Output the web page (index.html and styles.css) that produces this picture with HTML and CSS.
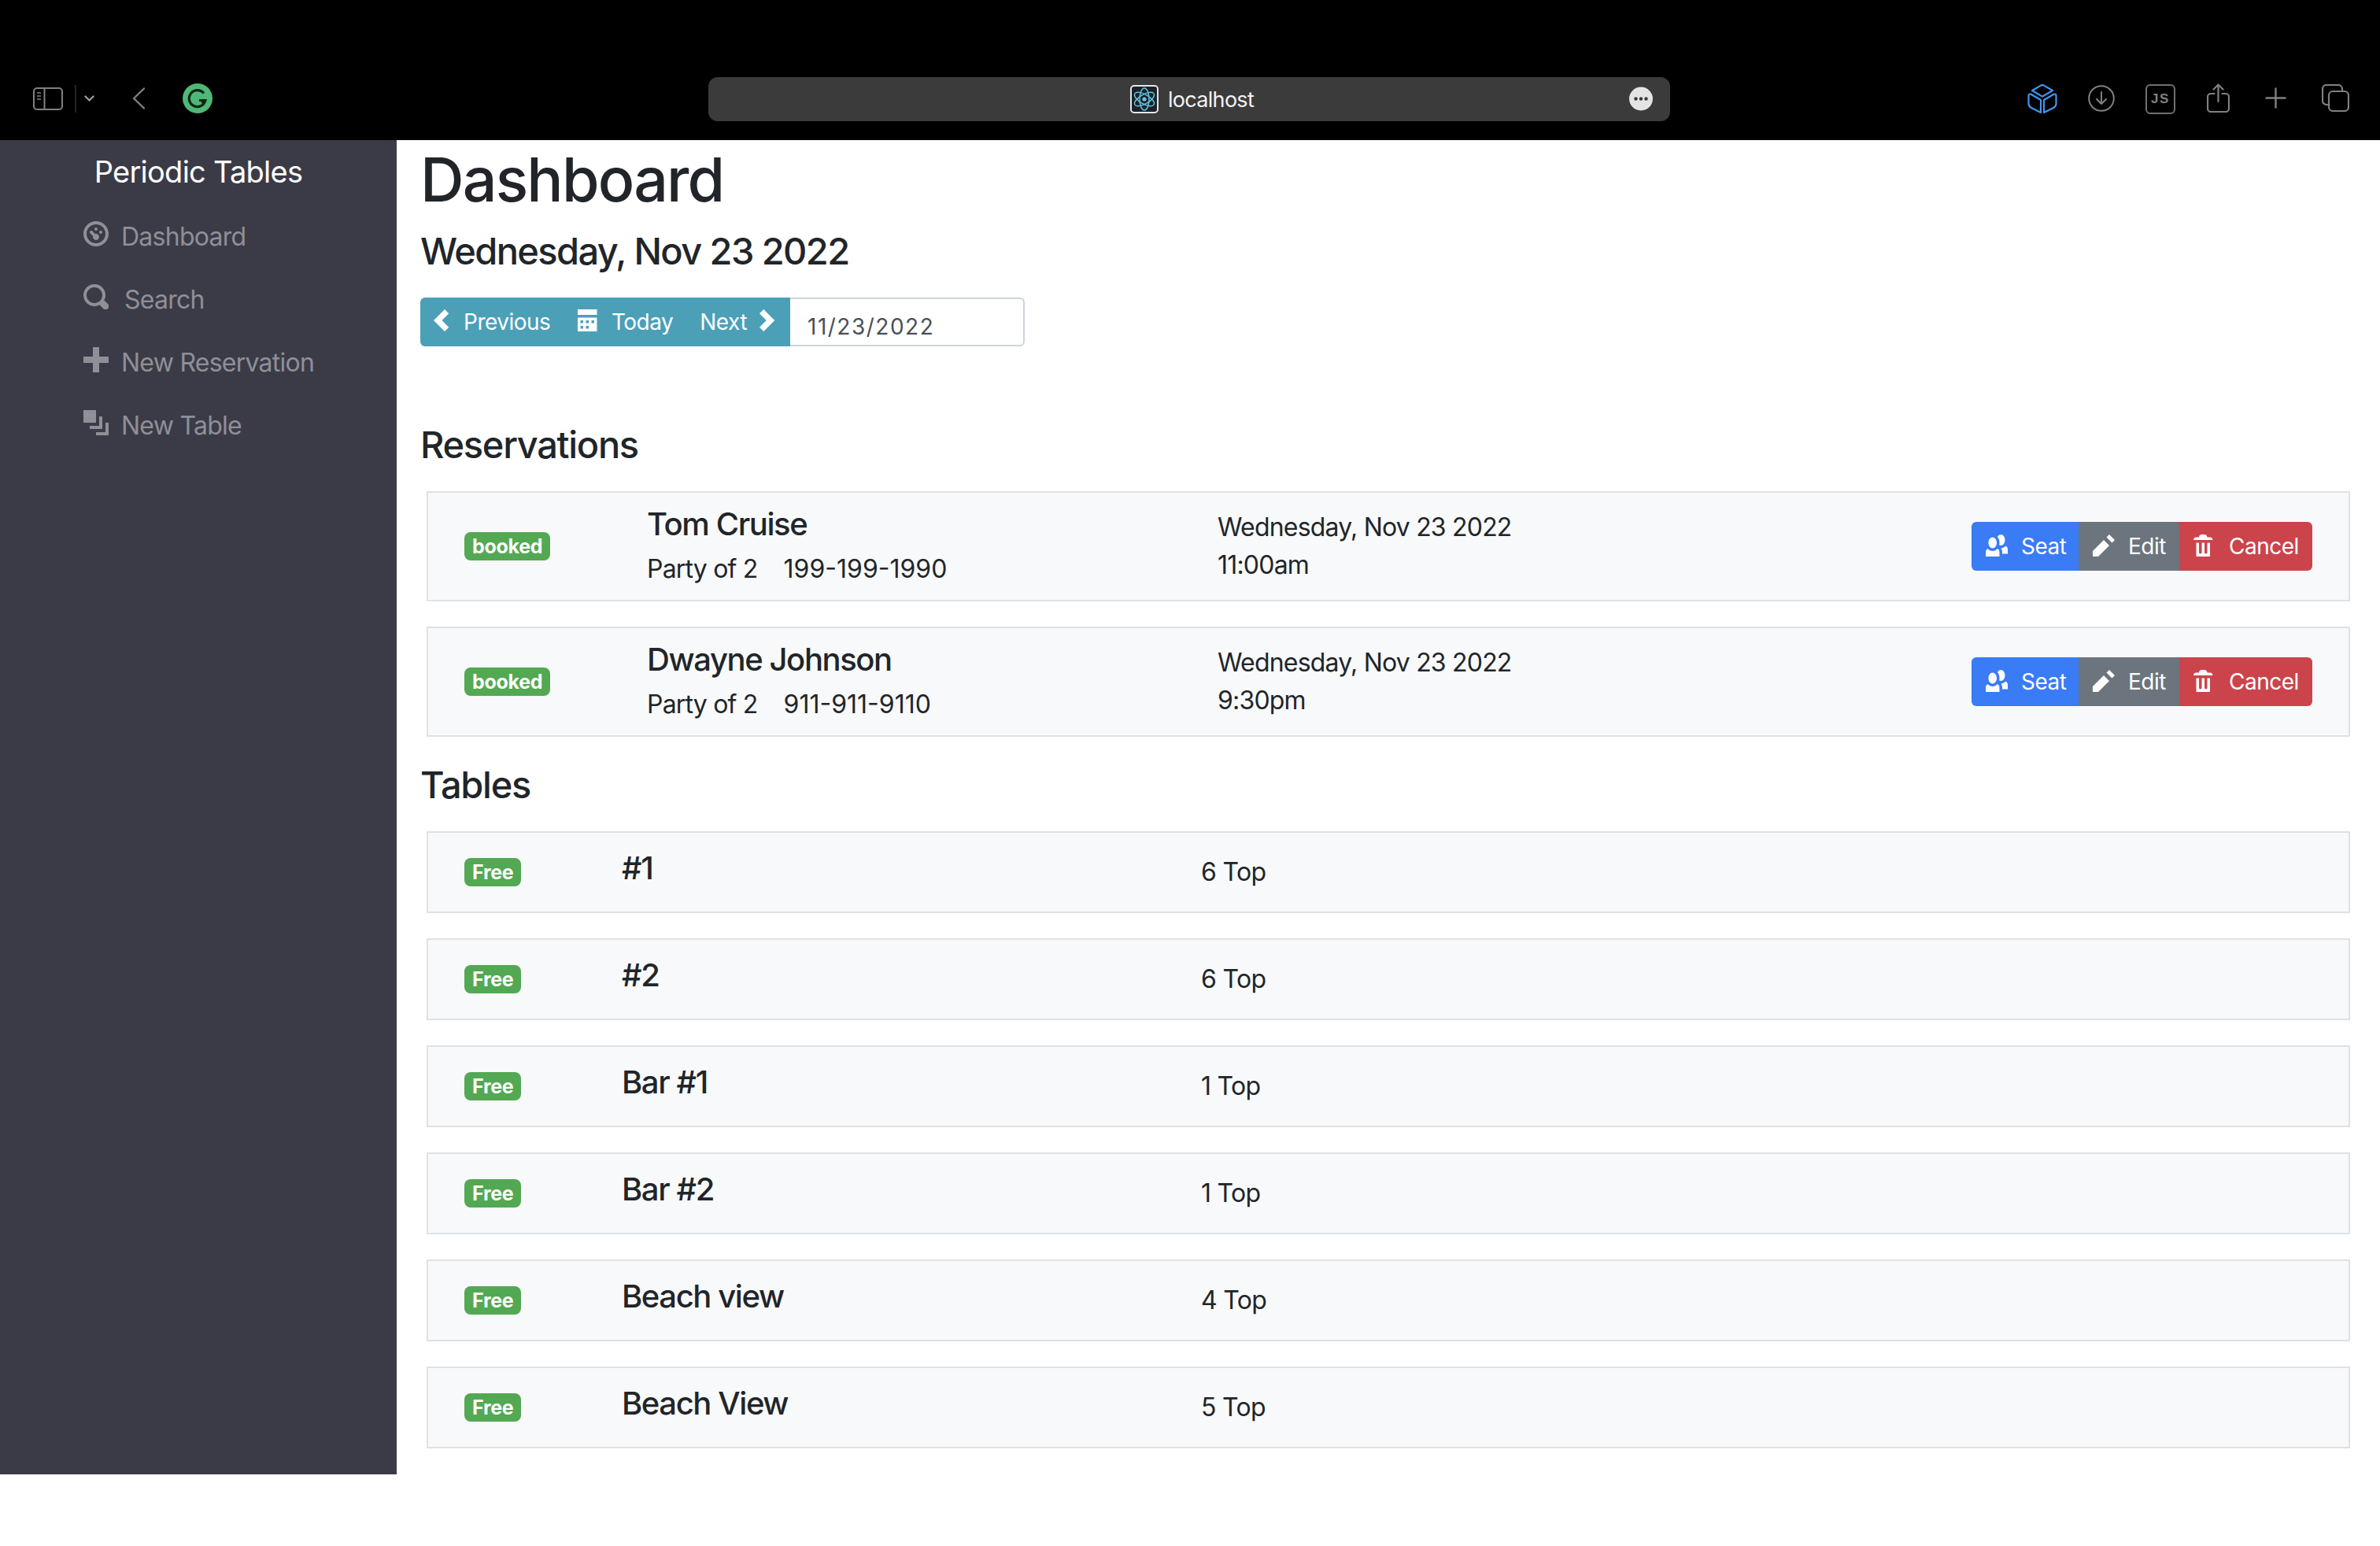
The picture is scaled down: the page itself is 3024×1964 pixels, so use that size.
FILE: index.html
```html
<!DOCTYPE html>
<html lang="en">
<head>
<meta charset="utf-8">
<title>Periodic Tables</title>
<link rel="stylesheet" href="styles.css">
</head>
<body>
<header class="toolbar">
  <div class="tb-left">
    <svg class="tb-sidebar" viewBox="0 0 38 29" fill="none" stroke="#808080" stroke-width="2"><rect x="1" y="1" width="36" height="27" rx="4"/><path d="M14.500 1v27"/><path d="M5 7h5M5 11h5M5 15h5" stroke-width="1.500"/></svg>
    <span class="tb-divider"></span>
    <svg class="tb-chevron" viewBox="0 0 13 8" fill="none" stroke="#9a9a9a" stroke-width="2.400" stroke-linecap="round" stroke-linejoin="round"><path d="M1.500 1.500 6.500 6.500 11.500 1.500"/></svg>
    <svg class="tb-back" viewBox="0 0 16 28" fill="none" stroke="#808080" stroke-width="2.400" stroke-linecap="round" stroke-linejoin="round"><path d="M15 1.500 2 14 15 26.500"/></svg>
    <svg class="tb-grammarly" viewBox="0 0 38 38"><circle cx="19" cy="19" r="19" fill="#4fb877"/><path d="M27 12.500A10.500 10.500 0 1 0 29 21.500H21" fill="none" stroke="#10261a" stroke-width="3.200"/><path d="M29 21.500l-1 6-5-3.500z" fill="#10261a"/></svg>
  </div>
  <div class="address">
    <svg class="favicon" viewBox="0 0 36 36" fill="none"><rect x="1" y="1" width="34" height="34" rx="4" fill="#1b2227" stroke="#e6e6e6" stroke-width="2"/><g stroke="#61c8ea" stroke-width="1.400"><ellipse cx="18" cy="18" rx="6" ry="14"/><ellipse cx="18" cy="18" rx="6" ry="14" transform="rotate(60 18 18)"/><ellipse cx="18" cy="18" rx="6" ry="14" transform="rotate(-60 18 18)"/></g><circle cx="18" cy="18" r="2.600" fill="#61c8ea"/></svg>
    <span class="address-text">localhost</span>
    <svg class="address-more" viewBox="0 0 30 31"><circle cx="15" cy="15.500" r="15" fill="#e4e4e4"/><circle cx="8.500" cy="15.500" r="2.200" fill="#3a3a3a"/><circle cx="15" cy="15.500" r="2.200" fill="#3a3a3a"/><circle cx="21.500" cy="15.500" r="2.200" fill="#3a3a3a"/></svg>
  </div>
  <div class="tb-right">
    <svg class="tb-cube" viewBox="0 0 38 38" fill="none" stroke="#3f96f0" stroke-width="2.200" stroke-linejoin="round"><path d="M17 1.600a4 4 0 0 1 4 0l11 6.400-13 7.600L6 8z"/><path d="M1.500 14.500a2 2 0 0 1 3-1.700L17 20v16L5 30a6 6 0 0 1-3.500-5z"/><path d="M36.500 14.500a2 2 0 0 0-3-1.700L21 20v16l12-6a6 6 0 0 0 3.500-5z"/></svg>
    <svg class="tb-download" viewBox="0 0 34 34" fill="none" stroke="#808080" stroke-width="2" stroke-linecap="round" stroke-linejoin="round"><circle cx="17" cy="17" r="15.800"/><path d="M17 9v15M11 18l6 6 6-6"/></svg>
    <div class="tb-js">JS</div>
    <svg class="tb-share" viewBox="0 0 29 37" fill="none" stroke="#808080" stroke-width="2.200" stroke-linecap="round" stroke-linejoin="round"><path d="M14.500 23V2M8.500 7.500l6-6 6 6"/><path d="M9.500 13H5a4 4 0 0 0-4 4v15a4 4 0 0 0 4 4h19a4 4 0 0 0 4-4V17a4 4 0 0 0-4-4h-4.500"/></svg>
    <svg class="tb-plus" viewBox="0 0 27 27" fill="none" stroke="#808080" stroke-width="2.400" stroke-linecap="round"><path d="M13.500 1.500v24M1.500 13.500h24"/></svg>
    <svg class="tb-copy" viewBox="0 0 35 35" fill="none" stroke="#808080" stroke-width="2.200"><path d="M8 26H6a5 5 0 0 1-5-5V6a5 5 0 0 1 5-5h15a5 5 0 0 1 5 5v2"/><rect x="9" y="9" width="25" height="25" rx="5"/></svg>
  </div>
</header>

<div class="layout">
  <aside class="sidebar">
    <div class="brand">Periodic Tables</div>
    <nav class="nav">
      <a class="nav-item"><svg class="nav-icon" viewBox="0 0 8 8"><path d="M4 0c-2.200 0-4 1.800-4 4s1.800 4 4 4 4-1.800 4-4-1.800-4-4-4zm0 1c1.660 0 3 1.340 3 3s-1.340 3-3 3-3-1.340-3-3 1.340-3 3-3zm0 1c-.28 0-.5.22-.5.5s.22.5.5.5.5-.22.5-.5-.22-.5-.5-.5zm-1.660 1a.5.5 0 0 0-.19.84l.91.91c-.02.08-.06.16-.06.25 0 .55.45 1 1 1s1-.45 1-1-.45-1-1-1c-.09 0-.17.04-.25.06l-.91-.91a.5.5 0 0 0-.44-.16.5.5 0 0 0-.06 0zm3.160 0c-.28 0-.5.22-.5.5s.22.5.5.5.5-.22.5-.5-.22-.5-.5-.5z"/></svg><span>Dashboard</span></a>
      <a class="nav-item nav-item-wide"><svg class="nav-icon" viewBox="0 0 8 8"><path d="M3.500 0c-1.930 0-3.500 1.570-3.500 3.500s1.570 3.500 3.500 3.500c.59 0 1.170-.14 1.660-.41a1 1 0 0 0 .13.13l1 1a1.020 1.020 0 1 0 1.440-1.440l-1-1a1 1 0 0 0-.16-.13c.27-.49.44-1.060.44-1.660 0-1.930-1.570-3.500-3.500-3.500zm0 1c1.390 0 2.500 1.110 2.500 2.500 0 .66-.24 1.270-.66 1.720-.01.01-.02.02-.03.03a1 1 0 0 0-.13.13c-.44.4-1.040.63-1.690.63-1.390 0-2.500-1.110-2.500-2.500s1.110-2.500 2.500-2.500z"/></svg><span>Search</span></a>
      <a class="nav-item"><svg class="nav-icon" viewBox="0 0 8 8"><path d="M3 0v3h-3v2h3v3h2v-3h3v-2h-3v-3h-2z"/></svg><span>New Reservation</span></a>
      <a class="nav-item"><svg class="nav-icon" viewBox="0 0 8 8"><path d="M0 0v4h4v-4h-4zm5 2v3h-3v1h4v-4h-1zm2 2v3h-3v1h4v-4h-1z"/></svg><span>New Table</span></a>
    </nav>
  </aside>

  <main class="main">
    <h1 class="title">Dashboard</h1>
    <h2 class="date">Wednesday, Nov 23 2022</h2>
    <div class="date-bar">
      <div class="date-buttons">
        <a class="date-btn date-prev"><svg class="date-icon" viewBox="0 0 6 8"><path d="M4 0l-4 4 4 4 1.500-1.500-2.500-2.500 2.500-2.500-1.500-1.500z"/></svg><span>Previous</span></a>
        <a class="date-btn date-today"><svg class="date-icon" viewBox="0 0 7 8"><path d="M0 0v2h7v-2h-7zm0 3v4.910c0 .05.04.09.09.09h6.810c.05 0 .09-.04.09-.09v-4.910h-7zm1 1h1v1h-1v-1zm2 0h1v1h-1v-1zm2 0h1v1h-1v-1zm-4 2h1v1h-1v-1zm2 0h1v1h-1v-1z"/></svg><span>Today</span></a>
        <a class="date-btn date-next"><span>Next</span><svg class="date-icon" viewBox="0 0 6 8"><path d="M1.500 0l-1.500 1.500 2.500 2.500-2.500 2.500 1.500 1.500 4-4-4-4z"/></svg></a>
      </div>
      <div class="date-input">11/23/2022</div>
    </div>

    <h3 class="section section-res">Reservations</h3>

    <article class="card card-res">
      <div class="col-status-res"><span class="badge">booked</span></div>
      <div class="col-name-res">
        <div class="res-name">Tom Cruise</div>
        <div class="res-meta"><span class="res-party">Party of 2</span><span class="res-phone">199-199-1990</span></div>
      </div>
      <div class="col-time"><div>Wednesday, Nov 23 2022</div><div>11:00am</div></div>
      <div class="actions">
        <a class="act act-seat"><svg class="act-icon" viewBox="0 0 8 8"><path d="M5.500 0c-.51 0-.95.35-1.220.88.45.54.72 1.280.72 2.130 0 .29-.03.55-.09.81.19.11.38.19.59.19.83 0 1.500-.9 1.500-2s-.67-2-1.500-2zm-3 1c-.83 0-1.500.9-1.500 2s.67 2 1.500 2 1.500-.9 1.500-2-.67-2-1.500-2zm4.750 3.160c-.43.51-1.020.82-1.690.84.27.38.44.84.44 1.340v.66h2v-1.660c0-.52-.31-.97-.75-1.190zm-6.500 1c-.44.22-.75.67-.75 1.190v1.660h5v-1.660c0-.52-.31-.97-.75-1.190-.45.53-1.060.84-1.750.84s-1.300-.32-1.750-.84z"/></svg><span>Seat</span></a>
        <a class="act act-edit"><svg class="act-icon" viewBox="0 0 8 8"><path d="M6 0l-1 1 2 2 1-1-2-2zm-2 2l-4 4v2h2l4-4-2-2z"/></svg><span>Edit</span></a>
        <a class="act act-cancel"><svg class="act-icon" viewBox="0 0 8 8"><path d="M3 0c-.55 0-1 .45-1 1h-1c-.55 0-1 .45-1 1h7c0-.55-.45-1-1-1h-1c0-.55-.45-1-1-1h-1zm-2 3v4.810c0 .11.08.19.19.19h4.630c.11 0 .19-.08.19-.19v-4.810h-1v3.500c0 .28-.22.5-.5.5s-.5-.22-.5-.5v-3.500h-1v3.500c0 .28-.22.5-.5.5s-.5-.22-.5-.5v-3.500h-1z"/></svg><span>Cancel</span></a>
      </div>
    </article>

    <article class="card card-res">
      <div class="col-status-res"><span class="badge">booked</span></div>
      <div class="col-name-res">
        <div class="res-name">Dwayne Johnson</div>
        <div class="res-meta"><span class="res-party">Party of 2</span><span class="res-phone">911-911-9110</span></div>
      </div>
      <div class="col-time"><div>Wednesday, Nov 23 2022</div><div>9:30pm</div></div>
      <div class="actions">
        <a class="act act-seat"><svg class="act-icon" viewBox="0 0 8 8"><path d="M5.500 0c-.51 0-.95.35-1.220.88.45.54.72 1.280.72 2.130 0 .29-.03.55-.09.81.19.11.38.19.59.19.83 0 1.500-.9 1.500-2s-.67-2-1.500-2zm-3 1c-.83 0-1.500.9-1.500 2s.67 2 1.500 2 1.500-.9 1.500-2-.67-2-1.500-2zm4.750 3.160c-.43.51-1.020.82-1.690.84.27.38.44.84.44 1.340v.66h2v-1.660c0-.52-.31-.97-.75-1.190zm-6.500 1c-.44.22-.75.67-.75 1.190v1.660h5v-1.660c0-.52-.31-.97-.75-1.190-.45.53-1.060.84-1.750.84s-1.300-.32-1.750-.84z"/></svg><span>Seat</span></a>
        <a class="act act-edit"><svg class="act-icon" viewBox="0 0 8 8"><path d="M6 0l-1 1 2 2 1-1-2-2zm-2 2l-4 4v2h2l4-4-2-2z"/></svg><span>Edit</span></a>
        <a class="act act-cancel"><svg class="act-icon" viewBox="0 0 8 8"><path d="M3 0c-.55 0-1 .45-1 1h-1c-.55 0-1 .45-1 1h7c0-.55-.45-1-1-1h-1c0-.55-.45-1-1-1h-1zm-2 3v4.810c0 .11.08.19.19.19h4.630c.11 0 .19-.08.19-.19v-4.810h-1v3.500c0 .28-.22.5-.5.5s-.5-.22-.5-.5v-3.500h-1v3.500c0 .28-.22.5-.5.5s-.5-.22-.5-.5v-3.500h-1z"/></svg><span>Cancel</span></a>
      </div>
    </article>

    <h3 class="section section-tables">Tables</h3>

    <article class="card card-table"><div class="col-status-table"><span class="badge">Free</span></div><div class="col-name-table">#1</div><div class="col-cap">6 Top</div></article>
    <article class="card card-table"><div class="col-status-table"><span class="badge">Free</span></div><div class="col-name-table">#2</div><div class="col-cap">6 Top</div></article>
    <article class="card card-table"><div class="col-status-table"><span class="badge">Free</span></div><div class="col-name-table">Bar #1</div><div class="col-cap">1 Top</div></article>
    <article class="card card-table"><div class="col-status-table"><span class="badge">Free</span></div><div class="col-name-table">Bar #2</div><div class="col-cap">1 Top</div></article>
    <article class="card card-table"><div class="col-status-table"><span class="badge">Free</span></div><div class="col-name-table">Beach view</div><div class="col-cap">4 Top</div></article>
    <article class="card card-table"><div class="col-status-table"><span class="badge">Free</span></div><div class="col-name-table">Beach View</div><div class="col-cap">5 Top</div></article>
  </main>
</div>
</body>
</html>
```
FILE: styles.css
```css
* { box-sizing: border-box; }
html, body { margin: 0; padding: 0; background: #fff; }
body { font-family: Inter, "Liberation Sans", sans-serif; color: #212529; }
h1, h2, h3 { margin: 0; font-weight: 500; }
svg { display: block; flex: none; }

/* Browser toolbar */
.toolbar { height: 178px; background: #000; display: flex; padding-top: 98px; align-items: flex-start; }
.tb-left { width: 900px; height: 56px; padding-left: 42px; display: flex; align-items: center; }
.tb-sidebar { width: 38px; height: 29px; margin-top: -2px; }
.tb-divider { width: 2px; height: 35px; background: #222; margin-left: 15px; margin-top: -2px; }
.tb-chevron { width: 13px; height: 8px; margin-left: 10px; margin-top: -2px; }
.tb-back { width: 16px; height: 28px; margin-left: 48px; margin-top: -2px; }
.tb-grammarly { width: 38px; height: 38px; margin-left: 48px; margin-top: -2px; }
.address { width: 1222px; height: 56px; background: #3b3b3b; border-radius: 12px; display: flex; align-items: center; padding-left: 536px; }
.favicon { width: 36px; height: 36px; }
.address-text { color: #f2f2f2; font-size: 27px; letter-spacing: -.7px; margin-left: 12px; line-height: 56px; padding-top: 2px; }
.address-more { width: 30px; height: 31px; margin-left: 477px; margin-top: -2px; }
.tb-right { flex: 1; height: 56px; display: flex; align-items: center; justify-content: flex-end; padding-right: 39px; }
.tb-cube { width: 38px; height: 38px; }
.tb-download { width: 34px; height: 34px; margin-left: 39px; margin-top: -3px; }
.tb-js { width: 38px; height: 38px; margin-left: 39px; border: 2px solid #707070; border-radius: 6px; color: #808080; font-size: 17px; font-weight: 700; display: flex; align-items: center; justify-content: center; font-family: "Liberation Sans", sans-serif; letter-spacing: 1.500px; }
.tb-share { width: 29px; height: 37px; margin-left: 40px; margin-top: -4px; }
.tb-plus { width: 27px; height: 27px; margin-left: 45px; margin-top: -3px; }
.tb-copy { width: 35px; height: 35px; margin-left: 45px; margin-top: -3px; }

/* App layout */
.layout { display: flex; align-items: stretch; }
.sidebar { width: 504px; flex: none; background: #3b3b47; }
.brand { color: #fff; font-size: 38px; letter-spacing: -.75px; line-height: 44px; text-align: center; padding-top: 18px; margin-bottom: 20px; }
.nav { display: flex; flex-direction: column; padding-left: 106px; }
.nav-item { height: 80px; display: flex; align-items: center; gap: 16px; color: #8f8f97; font-size: 32px; letter-spacing: -.75px; }
.nav-item-wide { gap: 20px; }
.nav-icon { width: 32px; height: 32px; fill: #8f8f97; margin-top: -6px; }

/* Main */
.main { flex: 1; min-width: 0; padding: 0 38px 1px 30px; }
.title { font-size: 77px; letter-spacing: -1.800px; line-height: 92px; margin-top: 4px; }
.date { font-size: 47px; letter-spacing: -1.600px; line-height: 56px; margin-top: 17px; }
.date-bar { display: flex; margin-top: 31px; height: 62px; }
.date-buttons { width: 470px; background: #4ba0b8; border-radius: 6px 0 0 6px; display: flex; align-items: center; color: #fff; font-size: 28px; letter-spacing: -.5px; }
.date-btn { display: flex; align-items: center; }
.date-icon { height: 28px; width: auto; fill: #fff; margin-top: -4px; }
.date-prev { margin-left: 17px; gap: 17px; }
.date-today { margin-left: 35px; gap: 18px; }
.date-next { margin-left: 34px; gap: 16px; }
.date-input { width: 298px; border: 2px solid #ced4da; border-left: 0; border-radius: 0 6px 6px 0; background: #fff; color: #495057; font-size: 28px; letter-spacing: 1.500px; padding: 14px 0 0 22px; line-height: 42px; }
.section { font-size: 47px; letter-spacing: -1.300px; line-height: 58px; }
.section-res { margin-top: 96px; margin-bottom: 30px; }
.section-tables { margin-top: 1px; margin-bottom: 30px; }

.card { margin: 0 0 32px 8px; background: #f8f9fa; border: 2px solid #dee2e6; display: flex; align-items: center; padding-left: 46px; }
.card-res { height: 140px; }
.card-table { height: 104px; }
.col-status-res { width: 232px; flex: none; }
.col-name-res { width: 725px; flex: none; margin-top: -9px; }
.col-status-table { width: 200px; flex: none; }
.col-name-table { width: 735px; flex: none; font-size: 40px; letter-spacing: -1.400px; line-height: 48px; font-weight: 500; margin-top: -10px; }
.col-cap { font-size: 32px; letter-spacing: -.7px; line-height: 48px; padding-left: 1px; }
.badge { display: inline-flex; align-items: center; height: 36px; padding: 0 10px; border-radius: 8px; background: #53a853; color: #fff; font-size: 25px; letter-spacing: -.3px; font-weight: 700; vertical-align: middle; }
.res-name { font-size: 40px; letter-spacing: -1.400px; line-height: 48px; font-weight: 500; margin-bottom: 9px; }
.res-meta { font-size: 32px; line-height: 48px; display: flex; gap: 33px; margin-bottom: -9px; }
.res-party { letter-spacing: -.8px; }
.col-time { font-size: 32px; letter-spacing: -.8px; line-height: 48px; flex: 1; }
.actions { display: flex; margin-right: 46px; height: 62px; color: #fff; font-size: 28px; letter-spacing: -.5px; }
.act { display: flex; align-items: center; gap: 17px; padding: 0 16px 0 18px; }
.act-icon { width: 28px; height: 28px; fill: #fff; margin-top: -2px; }
.act-seat { width: 136px; background: #3a7bf6; border-radius: 6px 0 0 6px; }
.act-edit { width: 128px; background: #6c757d; }
.act-cancel { width: 169px; background: #cb444b; border-radius: 0 6px 6px 0; }
```
